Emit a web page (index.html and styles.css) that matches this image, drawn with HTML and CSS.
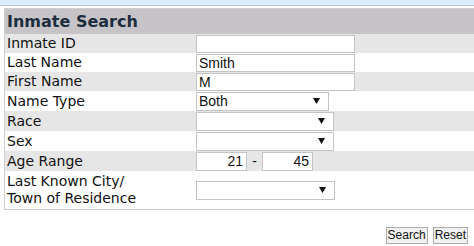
FILE: index.html
```html
<!DOCTYPE html>
<html>
<head>
<meta charset="utf-8">
<link rel="stylesheet" href="styles.css">
</head>
<body>
<div class="topstrip"></div>
<table class="search">
  <tr class="head"><th colspan="2">Inmate Search</th></tr>
  <tr class="alt"><td class="lbl">Inmate ID</td><td><input class="txt" type="text" value=""></td></tr>
  <tr><td class="lbl">Last Name</td><td><input class="txt" type="text" value="Smith"></td></tr>
  <tr class="alt"><td class="lbl">First Name</td><td><input class="txt" type="text" value="M"></td></tr>
  <tr class="tall"><td class="lbl">Name Type</td><td><select class="sel w132"><option>Both</option></select></td></tr>
  <tr class="alt tall"><td class="lbl">Race</td><td><select class="sel w137"><option></option></select></td></tr>
  <tr class="tall"><td class="lbl">Sex</td><td><select class="sel w137"><option></option></select></td></tr>
  <tr class="alt tall"><td class="lbl">Age Range</td><td><div class="age"><input class="num" type="text" value="21"><span class="dash">-</span><input class="num" type="text" value="45"></div></td></tr>
  <tr class="city"><td class="lbl">Last Known City/<br>Town of Residence</td><td><select class="sel w138"><option></option></select></td></tr>
</table>
<div class="actions">
  <button class="btn">Search</button><button class="btn">Reset</button>
</div>
</body>
</html>
```
FILE: styles.css
```css
html, body { margin: 0; padding: 0; background: #fff; overflow: hidden; }
body { width: 474px; height: 246px; }
.topstrip {
  height: 5px;
  background: #daeef9;
  border-bottom: 1px solid #b9c3cc;
  margin-bottom: 2px;
}
.search {
  margin-left: 4px;
  width: 480px;
  border-collapse: collapse;
  border: 1px solid #cfcfcf;
  font-family: "DejaVu Sans", Verdana, sans-serif;
  font-size: 14px;
  color: #111;
}
.search th {
  background: #c7c4c7;
  color: #1b2d3e;
  font-size: 16px;
  font-weight: bold;
  text-align: left;
  height: 25px;
  padding: 0 0 0 2px;
  line-height: 25px;
}
.search td { padding: 0; height: 19px; line-height: 17px; }
.search tr.tall td { height: 20px; }
.search tr.alt td { background: #e6e6e6; }
.search td.lbl { width: 189px; padding-left: 2px; vertical-align: middle; }
.search tr.city td { height: 38px; }
.txt {
  box-sizing: border-box;
  width: 159px;
  height: 18px;
  margin: 0;
  padding: 0 2px;
  border: 1px solid #c4c4c4;
  font-family: "Liberation Sans", Arial, sans-serif;
  font-size: 14px;
  color: #111;
  display: block;
  background: #fff;
}
.sel {
  -webkit-appearance: none;
  appearance: none;
  box-sizing: border-box;
  height: 19px;
  margin: 0;
  padding: 0 2px;
  border: 1px solid #c4c4c4;
  border-radius: 0;
  font-family: "Liberation Sans", Arial, sans-serif;
  font-size: 14px;
  color: #111;
  display: block;
  background: #fff url("data:image/svg+xml;utf8,<svg xmlns='http://www.w3.org/2000/svg' width='7' height='6'><path d='M0 0H7L3.5 6Z' fill='%23111'/></svg>") no-repeat right 8px center;
}
.w132 { width: 133px; }
.w137 { width: 138px; }
.w138 { width: 139px; }
.age { display: flex; align-items: center; }
.num {
  box-sizing: border-box;
  width: 51px;
  height: 19px;
  margin: 0;
  padding: 0 3px;
  border: 1px solid #c4c4c4;
  font-family: "Liberation Sans", Arial, sans-serif;
  font-size: 14px;
  text-align: right;
  color: #111;
  background: #fff;
}
.dash {
  width: 15px;
  text-align: center;
  font-family: "Liberation Sans", Arial, sans-serif;
  font-size: 14px;
}
.actions {
  display: flex;
  justify-content: flex-end;
  gap: 5px;
  padding: 17px 6px 0 0;
}
.btn {
  box-sizing: border-box;
  height: 17px;
  padding: 0 1px;
  margin: 0;
  border: 1px solid #adadad;
  background: #f1f1f1;
  font-family: "Liberation Sans", Arial, sans-serif;
  font-size: 12px;
  line-height: 15px;
  color: #111;
}
```
